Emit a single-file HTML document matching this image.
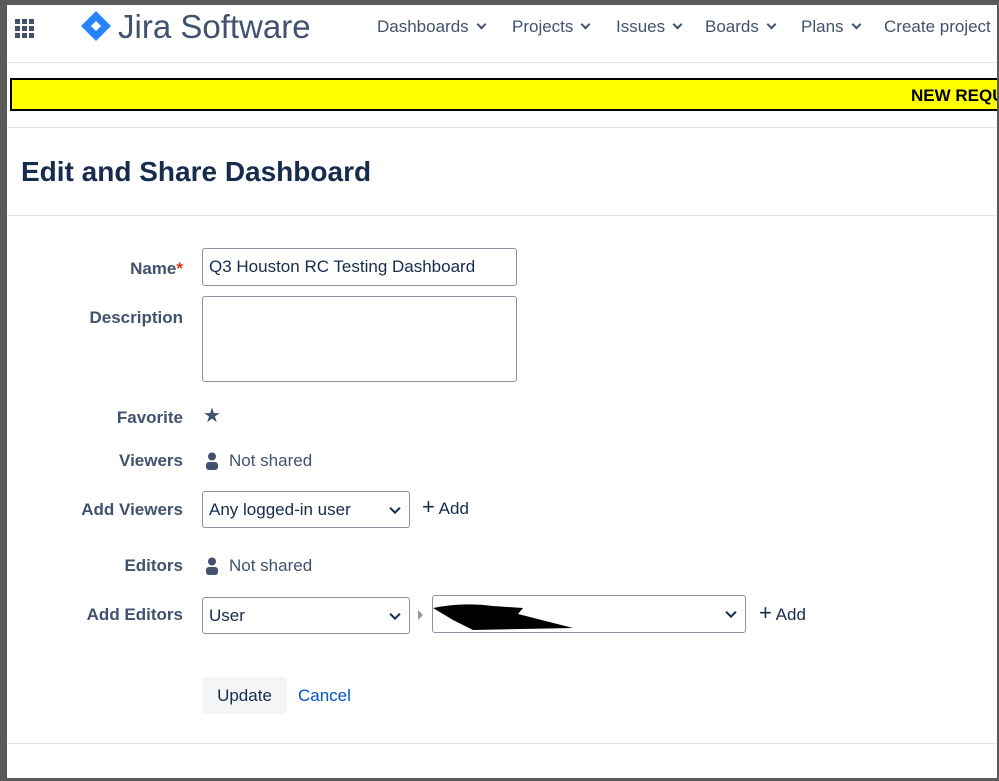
<!DOCTYPE html>
<html><head><style>
body{margin:0;width:999px;height:781px;overflow:hidden;background:#5a5a5a;font-family:"Liberation Sans",sans-serif;}
#p{position:absolute;left:7px;top:5px;width:990px;height:773px;background:#fff;overflow:hidden;}
.a{position:absolute;white-space:nowrap;}
.nav{font-size:17px;color:#42526e;top:12px;}
.nc{display:inline-block;width:5px;height:5px;border-right:2px solid #42526e;border-bottom:2px solid #42526e;transform:rotate(45deg);margin-left:9px;position:relative;top:-4px;}
.lbl{position:absolute;right:814px;font-size:17px;font-weight:bold;color:#42526e;text-align:right;white-space:nowrap;}
.box{position:absolute;border:1px solid #8993a4;border-radius:3px;background:#fff;font-size:17px;color:#172b4d;box-sizing:border-box;padding-left:6px;white-space:nowrap;}
.chev{position:absolute;right:10px;top:50%;width:6px;height:6px;border-right:2px solid #172b4d;border-bottom:2px solid #172b4d;transform:translateY(-70%) rotate(45deg);}
.hr{position:absolute;left:0;width:990px;height:1px;background:#dfe1e6;}
.txt{position:absolute;font-size:17px;color:#42526e;white-space:nowrap;}
</style></head><body>
<div id="p">
<svg class="a" style="left:8px;top:14px" width="20" height="20"><g fill="#42526e"><rect x="0" y="0" width="5" height="5"/><rect x="7" y="0" width="5" height="5"/><rect x="14" y="0" width="5" height="5"/><rect x="0" y="7" width="5" height="5"/><rect x="7" y="7" width="5" height="5"/><rect x="14" y="7" width="5" height="5"/><rect x="0" y="14" width="5" height="5"/><rect x="7" y="14" width="5" height="5"/><rect x="14" y="14" width="5" height="5"/></g></svg>
<svg class="a" style="left:73px;top:5px" width="32" height="32"><path d="M16 1 L31 16 L16 31 L1 16Z" fill="#2684ff"/><path d="M16 11 L21 16 L16 21 L11 16Z" fill="#fff"/></svg>
<div class="a" style="left:111px;top:3px;font-size:33px;color:#42526e">Jira Software</div>
<div class="a nav" style="left:370px">Dashboards<span class="nc"></span></div>
<div class="a nav" style="left:505px">Projects<span class="nc"></span></div>
<div class="a nav" style="left:609px">Issues<span class="nc"></span></div>
<div class="a nav" style="left:698px">Boards<span class="nc"></span></div>
<div class="a nav" style="left:794px">Plans<span class="nc"></span></div>
<div class="a nav" style="left:877px">Create project</div>
<div class="hr" style="top:57px"></div>
<div class="a" style="left:3px;top:73px;width:995px;height:33px;background:#ff0;border:2px solid #000;box-sizing:border-box;"></div>
<div class="a" style="left:904px;top:81px;font-size:17px;font-weight:bold;color:#000">NEW REQU</div>
<div class="hr" style="top:122px"></div>
<div class="a" style="left:14px;top:151px;font-size:28px;font-weight:bold;color:#172b4d">Edit and Share Dashboard</div>
<div class="hr" style="top:210px"></div>
<div class="lbl" style="top:254px">Name<span style="color:#de350b">*</span></div>
<div class="box" style="left:195px;top:243px;width:315px;height:38px;line-height:36px">Q3 Houston RC Testing Dashboard</div>
<div class="lbl" style="top:303px">Description</div>
<div class="box" style="left:195px;top:291px;width:315px;height:86px"></div>
<div class="lbl" style="top:403px">Favorite</div>
<div class="a" style="left:196px;top:398px;font-size:20px;color:#42526e">★</div>
<div class="lbl" style="top:446px">Viewers</div>
<svg class="a" style="left:199px;top:447px" width="12" height="18"><circle cx="6" cy="4.5" r="4" fill="#42526e"/><rect x="0" y="10" width="12" height="8" rx="3" fill="#42526e"/></svg>
<div class="txt" style="left:222px;top:446px">Not shared</div>
<div class="lbl" style="top:495px">Add Viewers</div>
<div class="box" style="left:195px;top:486px;width:208px;height:37px;line-height:35px">Any logged-in user<span class="chev"></span></div>
<div class="txt" style="left:415px;top:493px;color:#172b4d"><span style="font-size:22px;line-height:17px">+</span> Add</div>
<div class="lbl" style="top:551px">Editors</div>
<svg class="a" style="left:199px;top:552px" width="12" height="18"><circle cx="6" cy="4.5" r="4" fill="#42526e"/><rect x="0" y="10" width="12" height="8" rx="3" fill="#42526e"/></svg>
<div class="txt" style="left:222px;top:551px">Not shared</div>
<div class="lbl" style="top:600px">Add Editors</div>
<div class="box" style="left:195px;top:592px;width:208px;height:37px;line-height:35px">User<span class="chev"></span></div>
<div class="a" style="left:411px;top:605px;width:0;height:0;border-left:5px solid #999;border-top:5px solid transparent;border-bottom:5px solid transparent"></div>
<div class="box" style="left:425px;top:590px;width:314px;height:38px"><span class="chev"></span>
<svg class="a" style="left:0;top:4px" width="150" height="32"><path d="M0 8 Q30 2 60 6 L90 8 L85 14 L140 28 L40 30 L20 20 L10 14Z" fill="#000"/></svg></div>
<div class="txt" style="left:752px;top:599px;color:#172b4d"><span style="font-size:22px;line-height:17px">+</span> Add</div>
<div class="a" style="left:195px;top:672px;width:85px;height:37px;background:#f4f5f7;border-radius:3px;font-size:17px;color:#172b4d;text-align:center;line-height:37px">Update</div>
<div class="a" style="left:291px;top:681px;font-size:17px;color:#0052cc">Cancel</div>
<div class="hr" style="top:738px"></div>
</div>
</body></html>
